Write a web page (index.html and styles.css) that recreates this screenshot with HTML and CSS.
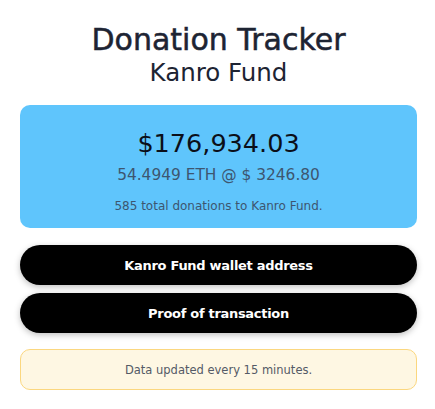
FILE: index.html
```html
<!DOCTYPE html>
<html>
<head>
<meta charset="utf-8">
<link rel="stylesheet" href="styles.css">
</head>
<body>
<main class="wrap">
  <header class="head">
    <h1 class="title">Donation Tracker</h1>
    <h2 class="subtitle">Kanro Fund</h2>
  </header>
  <section class="card">
    <div class="amount">$176,934.03</div>
    <div class="eth">54.4949 ETH @ $ 3246.80</div>
    <div class="count">585 total donations to Kanro Fund.</div>
  </section>
  <div class="buttons">
    <a class="btn">Kanro Fund wallet address</a>
    <a class="btn">Proof of transaction</a>
  </div>
  <div class="notice">Data updated every 15 minutes.</div>
</main>
</body>
</html>
```
FILE: styles.css
```css
* { box-sizing: border-box; }
body {
  margin: 0;
  background: #fff;
  font-family: "DejaVu Sans", "Open Sans", sans-serif;
  color: #1d2433;
}
.wrap {
  width: 397px;
  margin: 0 0 0 20px;
  padding-top: 21px;
  display: flex;
  flex-direction: column;
}
.head { text-align: center; }
.title {
  margin: 0;
  font-size: 30px;
  line-height: 38px;
  font-weight: 500;
  color: #1d2433;
  -webkit-text-stroke: 0.5px #1d2433;
}
.subtitle {
  margin: 0;
  font-size: 24.5px;
  line-height: 28px;
  font-weight: 400;
  color: #1d2433;
}
.card {
  margin-top: 18px;
  height: 123px;
  background: #5fc5fc;
  border-radius: 10px;
  text-align: center;
  padding-top: 21px;
}
.amount {
  font-size: 25.5px;
  line-height: 34px;
  color: #0b0f19;
}
.eth {
  margin-top: 5px;
  font-size: 15.4px;
  line-height: 20px;
  color: #3d5670;
}
.count {
  margin-top: 14px;
  font-size: 12px;
  line-height: 14px;
  color: #3d5670;
}
.buttons {
  margin-top: 17px;
  display: flex;
  flex-direction: column;
  gap: 8px;
}
.btn {
  height: 40px;
  border-radius: 20px;
  background: #000;
  color: #fff;
  font-weight: bold;
  font-size: 13px;
  letter-spacing: -0.3px;
  display: flex;
  align-items: center;
  justify-content: center;
  box-shadow: 0 2px 6px rgba(0,0,0,0.25);
}
.notice {
  margin-top: 16px;
  height: 41px;
  background: #fef7e3;
  border: 1px solid #fbd77f;
  border-radius: 10px;
  display: flex;
  align-items: center;
  justify-content: center;
  font-size: 11.5px;
  color: #545a66;
}
```
